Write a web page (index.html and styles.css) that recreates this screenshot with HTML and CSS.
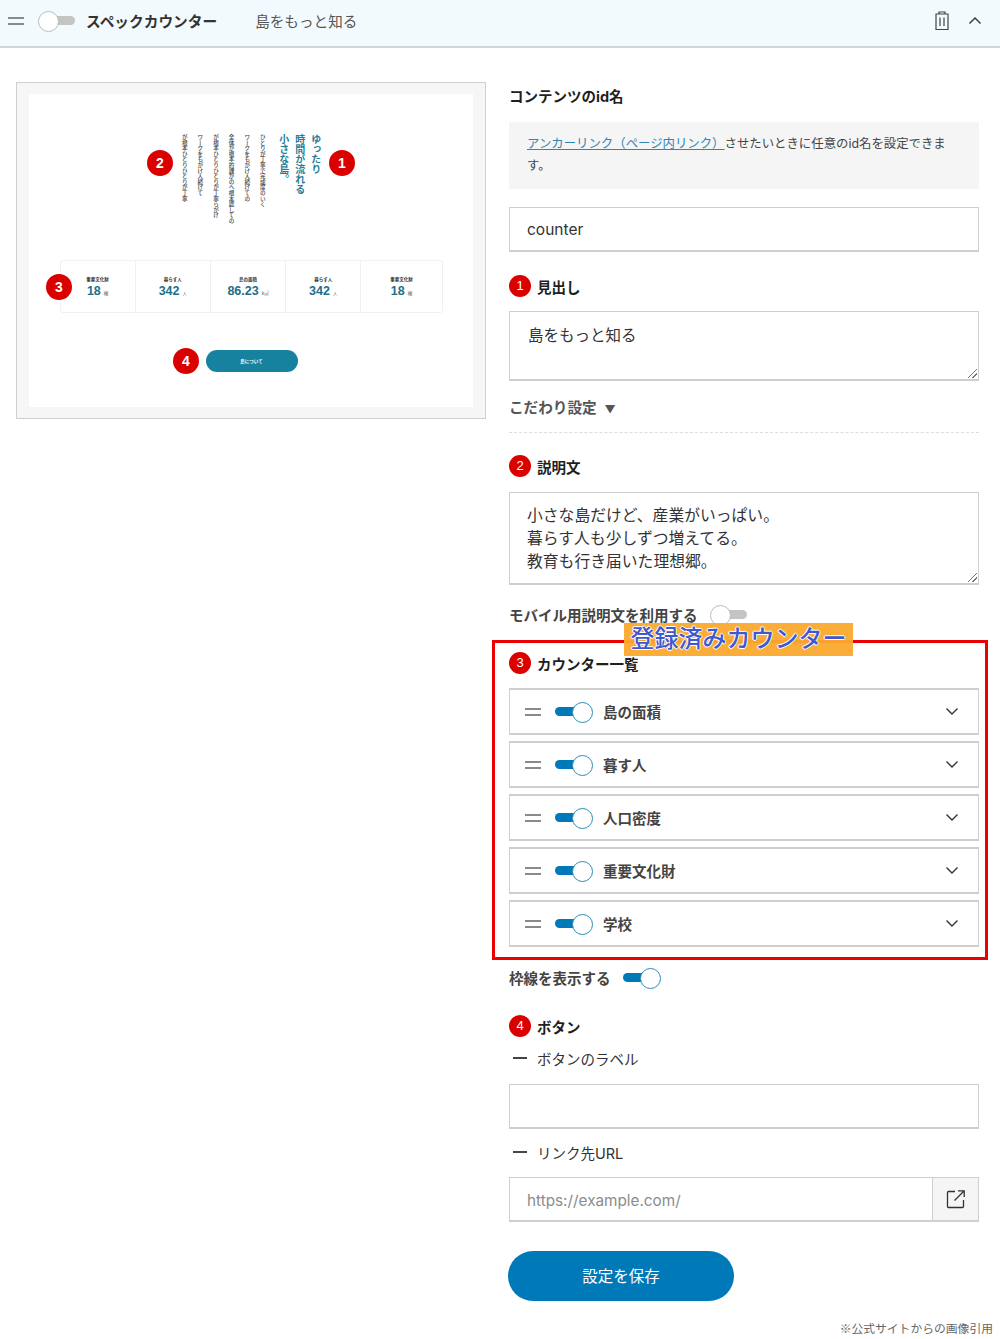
FILE: index.html
```html
<!DOCTYPE html>
<html lang="ja">
<head>
<meta charset="utf-8">
<title>スペックカウンター</title>
<link rel="stylesheet" href="styles.css">
</head>
<body>
<header class="bar">
  <span class="handle handle-top"></span>
  <span class="toggle toggle-off"></span>
  <strong class="bar-title">スペックカウンター</strong>
  <span class="bar-sub">島をもっと知る</span>
  <svg class="trash" width="16" height="20" viewBox="0 0 16 20" fill="none" stroke="#444" stroke-width="1.2"><path d="M1.5 3h13M5 3V1h6v2M2 3v15.5h12V3M6 6.5v8.5M10 6.5v8.5"/></svg>
  <svg class="chev-up" width="14" height="9" viewBox="0 0 14 9" fill="none" stroke="#333" stroke-width="1.4"><path d="M1.5 7.5 7 2l5.500 5.500"/></svg>
</header>
<main class="main">
  <section class="preview">
    <div class="shot">
      <div class="shot-top">
        <div class="shot-head"><span>ゆったり</span><span>時間が流れる</span><span>小さな島。</span></div>
        <div class="shot-desc"><span>ひとりが丁寧で完成度のいく</span><span>ワークをもがけ人続けての</span><span>全体が根本的課がのへ根本認しての</span><span>が根本ひとりひとりが丁寧らがけ</span><span>ワークをもがけ人続けて</span><span>が根本ひとりひとりが丁寧</span></div>
      </div>
      <div class="stats">
        <div class="stat"><small>重要文化財</small><b>18<i>棟</i></b></div>
        <div class="stat"><small>暮らす人</small><b>342<i>人</i></b></div>
        <div class="stat"><small>島の面積</small><b>86.23<i>k㎡</i></b></div>
        <div class="stat"><small>暮らす人</small><b>342<i>人</i></b></div>
        <div class="stat"><small>重要文化財</small><b>18<i>棟</i></b></div>
      </div>
      <div class="shot-btn">島について</div>
    </div>
    <span class="pin pin-1">1</span>
    <span class="pin pin-2">2</span>
    <span class="pin pin-3">3</span>
    <span class="pin pin-4">4</span>
  </section>
  <section class="form">
    <h3 class="label first">コンテンツのid名</h3>
    <p class="help"><a href="#">アンカーリンク（ページ内リンク）</a>させたいときに任意のid名を設定できます。</p>
    <div class="field field-id">counter</div>
    <h3 class="label l-head"><span class="num">1</span>見出し</h3>
    <div class="field area area-head">島をもっと知る<span class="grip"></span></div>
    <div class="detail">こだわり設定<span class="tri">▼</span></div>
    <h3 class="label l-desc"><span class="num">2</span>説明文</h3>
    <div class="field area area-desc">小さな島だけど、産業がいっぱい。<br>暮らす人も少しずつ増えてる。<br>教育も行き届いた理想郷。<span class="grip"></span></div>
    <div class="opt opt-mobile">モバイル用説明文を利用する<span class="toggle toggle-off"></span></div>
    <h3 class="label l-list"><span class="num">3</span>カウンター一覧</h3>
    <ul class="items">
      <li class="item"><span class="handle"></span><span class="toggle toggle-on"></span><span class="item-name">島の面積</span><svg class="chev" width="14" height="9" viewBox="0 0 14 9" fill="none" stroke="#333" stroke-width="1.4"><path d="M1.500 1.500 7 7l5.500-5.500"/></svg></li>
      <li class="item"><span class="handle"></span><span class="toggle toggle-on"></span><span class="item-name">暮す人</span><svg class="chev" width="14" height="9" viewBox="0 0 14 9" fill="none" stroke="#333" stroke-width="1.4"><path d="M1.500 1.500 7 7l5.500-5.500"/></svg></li>
      <li class="item"><span class="handle"></span><span class="toggle toggle-on"></span><span class="item-name">人口密度</span><svg class="chev" width="14" height="9" viewBox="0 0 14 9" fill="none" stroke="#333" stroke-width="1.4"><path d="M1.500 1.500 7 7l5.500-5.500"/></svg></li>
      <li class="item"><span class="handle"></span><span class="toggle toggle-on"></span><span class="item-name">重要文化財</span><svg class="chev" width="14" height="9" viewBox="0 0 14 9" fill="none" stroke="#333" stroke-width="1.4"><path d="M1.500 1.500 7 7l5.500-5.500"/></svg></li>
      <li class="item"><span class="handle"></span><span class="toggle toggle-on"></span><span class="item-name">学校</span><svg class="chev" width="14" height="9" viewBox="0 0 14 9" fill="none" stroke="#333" stroke-width="1.4"><path d="M1.500 1.500 7 7l5.500-5.500"/></svg></li>
    </ul>
    <div class="opt opt-frame">枠線を表示する<span class="toggle toggle-on"></span></div>
    <h3 class="label l-btn"><span class="num">4</span>ボタン</h3>
    <div class="sub sub-label">ボタンのラベル</div>
    <div class="field field-label"></div>
    <div class="sub sub-url">リンク先URL</div>
    <div class="field url"><span class="url-text">https://example.com/</span><span class="url-btn"><svg width="20" height="20" viewBox="0 0 20 20" fill="none" stroke="#333" stroke-width="1.300"><path d="M9 2.500H2.500a1 1 0 0 0-1 1v14a1 1 0 0 0 1 1h14a1 1 0 0 0 1-1V11M8.500 11.500 18 2M12 1.800h6.200V8"/></svg></span></div>
    <button class="save" type="button">設定を保存</button>
  </section>
</main>
<div class="callout"><span class="callout-tag">登録済みカウンター</span></div>
<footer class="note">※公式サイトからの画像引用</footer>
</body>
</html>
```
FILE: styles.css
```css
* { box-sizing: border-box; }
html, body { margin: 0; padding: 0; }
body {
  position: relative;
  width: 1000px;
  height: 1339px;
  overflow: hidden;
  background: #fff;
  color: #222;
  font-family: "Inter", "Noto Sans CJK JP", sans-serif;
}
.bar {
  display: flex;
  align-items: center;
  height: 48px;
  padding: 0 17px 5px 8px;
  background: #f3fafd;
  border-bottom: 2px solid #d2d4d6;
}
.handle {
  display: block;
  flex: none;
  width: 16px;
  height: 8px;
  border-top: 2px solid #8a8a8a;
  border-bottom: 2px solid #8a8a8a;
}
.handle-top { margin-right: 14px; }
.toggle {
  position: relative;
  display: inline-block;
  flex: none;
  width: 37px;
  height: 19px;
}
.toggle::before {
  content: "";
  position: absolute;
  top: 5px;
  left: 8px;
  right: 0;
  height: 9px;
  border-radius: 5px;
  background: #c4c4c4;
}
.toggle::after {
  content: "";
  position: absolute;
  top: 0;
  left: 0;
  width: 19px;
  height: 19px;
  border-radius: 50%;
  background: #fff;
  border: 1px solid #bbb;
}
.toggle-on::before { left: 0; right: 8px; background: #0079b8; }
.toggle-on::after { left: 17px; border: 1.500px solid #2a8cbb; }
.bar-title { margin-left: 11px; font-size: 14.700px; font-weight: 700; color: #333; }
.bar-sub { margin-left: 38px; font-size: 14.600px; color: #555; }
.trash { margin-left: auto; }
.chev-up { margin-left: 18px; margin-right: 1px; }

.main {
  display: flex;
  align-items: flex-start;
  padding: 34px 21px 0 16px;
}
.preview {
  position: relative;
  flex: none;
  width: 470px;
  height: 337px;
  background: #f6f6f6;
  border: 1px solid #cfcfcf;
  padding: 11px 12px;
}
.shot {
  display: flex;
  flex-direction: column;
  align-items: center;
  height: 313px;
  background: #fff;
  padding-top: 40px;
}
.shot-top {
  display: flex;
  flex-direction: row-reverse;
  gap: 14px;
  height: 94px;
}
.shot-head, .shot-desc {
  display: flex;
  flex-direction: row-reverse;
  align-items: flex-start;
}
.shot-head span, .shot-desc span { writing-mode: vertical-rl; display: block; }
.shot-head { gap: 6px; font-size: 10px; font-weight: 700; color: #1d7f9a; line-height: 10px; }
.shot-desc { gap: 10px; font-size: 5.600px; font-weight: 500; color: #444; line-height: 5.600px; }
.stats {
  display: flex;
  width: 383px;
  height: 53px;
  margin-top: 32px;
  border: 1px solid #f0f0f0;
  border-radius: 3px;
}
.stat {
  flex: 1;
  display: flex;
  flex-direction: column;
  align-items: center;
  padding-top: 15px;
  border-right: 1px solid #f0f0f0;
}
.stat:last-child { flex: 1.08; border-right: 0; }
.stat small { font-size: 4.500px; line-height: 7px; font-weight: 700; color: #333; }
.stat b {
  margin-top: 1px;
  font-family: "Liberation Sans", sans-serif;
  font-size: 12.500px;
  line-height: 14px;
  font-weight: 700;
  color: #1b6f8a;
}
.stat i { margin-left: 3px; font-family: "Noto Sans CJK JP", sans-serif; font-size: 4.500px; font-style: normal; font-weight: 400; color: #555; }
.shot-btn {
  display: flex;
  align-items: center;
  justify-content: center;
  width: 92px;
  height: 22px;
  margin-top: 37px;
  margin-left: 1px;
  border-radius: 11px;
  background: #16829f;
  color: #fff;
  font-size: 4.500px;
  font-weight: 700;
}
.pin {
  position: absolute;
  width: 26px;
  height: 26px;
  border-radius: 50%;
  background: #db0000;
  color: #fff;
  font-family: "Liberation Sans", sans-serif;
  font-size: 14px;
  font-weight: 700;
  line-height: 26px;
  text-align: center;
}
.pin-1 { left: 312px; top: 67px; }
.pin-2 { left: 130px; top: 67px; }
.pin-3 { left: 29px; top: 191px; }
.pin-4 { left: 156px; top: 265px; }

.form { flex: none; width: 470px; margin-left: 23px; }
.label {
  display: flex;
  align-items: center;
  height: 24px;
  margin: 0;
  font-size: 14.500px;
  font-weight: 700;
  color: #1f1f1f;
}
.first { margin-top: 1px; }
.num {
  flex: none;
  width: 22px;
  height: 22px;
  margin-right: 6px;
  border-radius: 50%;
  background: #db0000;
  color: #fff;
  font-family: "Liberation Sans", sans-serif;
  font-size: 13px;
  font-weight: 400;
  line-height: 22px;
  text-align: center;
}
.help {
  height: 67px;
  margin: 15px 0 18px;
  padding: 11px 18px;
  background: #f5f5f5;
  font-size: 12.400px;
  line-height: 22px;
  color: #444;
}
.help a { color: #2e86b3; text-decoration: underline; }
.field {
  border: 1px solid #cfcfcf;
  border-bottom-width: 2px;
  background: #fff;
  font-size: 15.500px;
  color: #333;
}
.field-id { height: 45px; padding: 0 17px; line-height: 44px; }
.l-head { margin-top: 22px; }
.area { position: relative; padding: 12px 18px; line-height: 23px; }
.area-head { height: 70px; margin-top: 13px; }
.grip {
  position: absolute;
  right: 1px;
  bottom: 1px;
  width: 9px;
  height: 9px;
  background: linear-gradient(135deg, transparent 45%, #777 45%, #777 55%, transparent 55%, transparent 72%, #777 72%, #777 82%, transparent 82%);
}
.detail {
  height: 52px;
  padding-top: 16px;
  border-bottom: 1px dashed #ddd;
  font-size: 14.600px;
  font-weight: 700;
  line-height: 22px;
  color: #555;
}
.tri { margin-left: 8px; font-size: 11px; font-weight: 400; }
.l-desc { margin-top: 21px; }
.area-desc { height: 93px; margin-top: 14px; padding: 11px 17px; font-size: 15.800px; }
.opt {
  display: flex;
  align-items: center;
  gap: 12px;
  height: 22px;
  font-size: 14.500px;
  font-weight: 700;
  color: #444;
}
.opt-mobile { margin-top: 18px; }
.l-list { margin-top: 26px; }
.items {
  display: flex;
  flex-direction: column;
  gap: 6px;
  margin: 13px 0 0;
  padding: 0;
  list-style: none;
}
.item {
  display: flex;
  align-items: center;
  height: 47px;
  padding: 0 19px 0 15px;
  border: 1px solid #cfcfcf;
  border-bottom-width: 2px;
  border-top-width: 2px;
}
.item .handle { margin-right: 14px; }
.item-name { margin-left: 11px; font-size: 14.500px; font-weight: 700; color: #444; }
.chev { margin-left: auto; }
.opt-frame { margin-top: 19px; }
.l-btn { margin-top: 26px; }
.sub {
  display: flex;
  align-items: center;
  height: 22px;
  font-size: 14.500px;
  color: #333;
}
.sub::before {
  content: "";
  width: 14px;
  height: 1.500px;
  margin: 0 10px 0 4px;
  background: #444;
}
.sub-label { margin-top: 9px; }
.field-label { height: 45px; margin-top: 15px; }
.sub-url { margin-top: 12px; }
.url {
  display: flex;
  align-items: stretch;
  height: 45px;
  margin-top: 14px;
}
.url-text { flex: 1; padding: 0 17px; font-size: 15.300px; line-height: 45px; color: #8c8c8c; }
.url-btn {
  display: flex;
  align-items: center;
  justify-content: center;
  width: 46px;
  background: #f5f5f5;
  border-left: 1px solid #cfcfcf;
}
.save {
  display: block;
  width: 226px;
  height: 50px;
  margin: 29px 0 0 -1px;
  padding: 0 0 2px;
  border: 0;
  border-radius: 26px;
  background: #0079b8;
  color: #fff;
  font-family: inherit;
  font-size: 15.500px;
}
.callout {
  position: absolute;
  left: 492px;
  top: 640px;
  width: 496px;
  height: 320px;
  border: 3px solid #ea0000;
}
.callout-tag {
  position: absolute;
  left: 129px;
  top: -20px;
  width: 229px;
  height: 33px;
  background: rgba(251, 169, 47, 0.95);
  color: #3f58d0;
  font-size: 24px;
  font-weight: 500;
  line-height: 31px;
  text-align: center;
  white-space: nowrap;
  text-shadow: 1px 0 #fff, -1px 0 #fff, 0 1px #fff, 0 -1px #fff;
}
.note {
  position: absolute;
  right: 7px;
  bottom: 2px;
  font-family: "Noto Sans CJK JP", sans-serif;
  font-size: 11.800px;
  line-height: 18px;
  color: #666;
}
```
